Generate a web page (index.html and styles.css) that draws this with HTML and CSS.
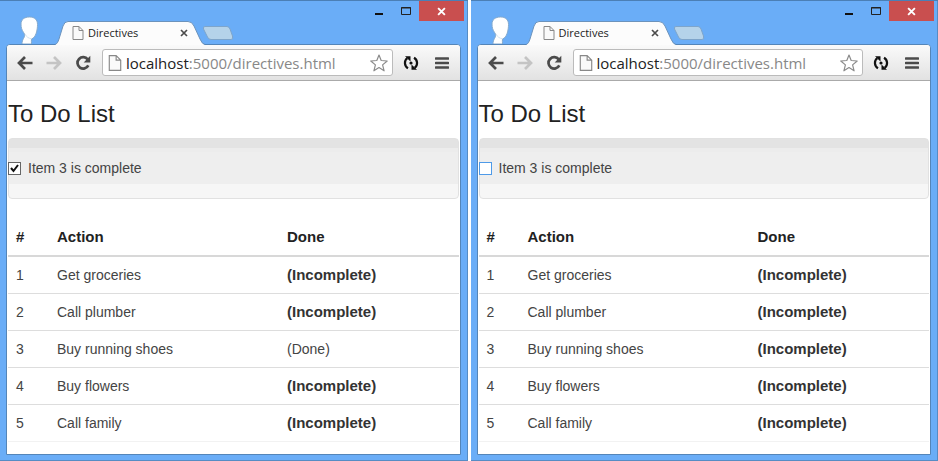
FILE: index.html
```html
<!DOCTYPE html>
<html lang="en">
<head>
<meta charset="utf-8">
<title>Directives</title>
<link rel="stylesheet" href="styles.css">
</head>
<body>
<svg class="sprite" aria-hidden="true">
  <symbol id="avatar" viewBox="0 0 20 28"><path d="M9.500 1C4.500 1 1 3.500 1 8c0 3.500.8 6 2.700 8.700C5 18.500 5 20 3.500 22.500 2.700 24 2 25.500 2 28h9.500c0-2-.3-3.500 0-5C16 21.500 17.500 14 17.500 8.500 17.500 3.500 14.500 1 9.500 1z" fill="#fff" stroke="#84aace"/><path d="M5 18c1.500 3 3.500 4.300 6.500 4.800" fill="none" stroke="#d5e3f0"/></symbol>
  <symbol id="tab-shape" viewBox="0 0 150 24"><path d="M0 24C2 23 3 21 4 18L8 5Q9.500 .5 13 .5H133Q137 .5 139 5L145 18Q147 23 150 24z" fill="#fcfcfc"/><path d="M0 23.500C2 23 3 21 4 18L8 5Q9.500 .5 13 .5H133Q137 .5 139 5L145 18Q147 23 150 23.500" fill="none" stroke="#6c93bc"/></symbol>
  <symbol id="new-tab" viewBox="0 0 32 16"><path d="M3 1.500H25Q27 1.500 28 4L30.500 11Q31.500 14.500 29 14.500H9Q6.500 14.500 5.500 12L1.500 4Q.8 1.500 3 1.500z" fill="#b5d3ea" stroke="#7ea5cb"/></symbol>
  <symbol id="page" viewBox="0 0 12 14"><path d="M1 .5H7L11 4.500V13.500H1zM7 .5V4.500H11" fill="#fafafa" stroke="#888"/></symbol>
  <symbol id="cross" viewBox="0 0 8 8"><path d="M1 1L7 7M7 1L1 7" fill="none" stroke="currentColor" stroke-width="1.700"/></symbol>
  <symbol id="arrow" viewBox="0 0 16 14"><path d="M8 1L2 7L8 13M2 7H15.500" fill="none" stroke="currentColor" stroke-width="2.700"/></symbol>
  <symbol id="reload" viewBox="0 0 16 16"><path d="M12.700 4.400A5.700 5.700 0 1 0 13.300 10.400" fill="none" stroke="currentColor" stroke-width="2.700"/><path d="M15.300 .8V7.500H8.700z" fill="currentColor"/></symbol>
  <symbol id="star" viewBox="0 0 18 18"><path d="M9 1L11.200 6.500L17.200 7L12.600 10.900L14.100 16.800L9 13.600L3.900 16.800L5.400 10.900L.8 7L6.800 6.500z" fill="#fff" stroke="#8b8b8b" stroke-width="1.200" stroke-linejoin="round"/></symbol>
  <symbol id="sync" viewBox="0 0 16 16"><path d="M4.300 3.200A6 6 0 0 0 5 13.200M11.700 12.800A6 6 0 0 0 11 2.800" fill="none" stroke="#111" stroke-width="2.200"/><path d="M2 1.200H7.500V6.500zM14 14.800H8.500V9.500z" fill="#111"/><circle cx="8" cy="8" r="1.600" fill="#111"/></symbol>
  <symbol id="menu" viewBox="0 0 14 13"><path d="M1 2H13M1 6.500H13M1 11H13" fill="none" stroke="#4b4b4b" stroke-width="2.600" stroke-linecap="round"/></symbol>
  <symbol id="minimize" viewBox="0 0 12 10"><path d="M2 8H10" stroke="#111" stroke-width="2"/></symbol>
  <symbol id="maximize" viewBox="0 0 12 10"><path d="M1.500 1.500H10.500V8.500H1.500zM1 2H11" fill="none" stroke="#222"/></symbol>
</svg>
<main class="desktop">
  <section class="window" aria-label="Item 3 done">
    <header class="strip">
      <svg class="avatar"><use href="#avatar"/></svg>
      <div class="tab">
        <svg class="tab-shape"><use href="#tab-shape"/></svg>
        <svg class="tab-page"><use href="#page"/></svg>
        <span class="tab-title">Directives</span>
        <button class="tab-close" aria-label="Close tab"><svg><use href="#cross"/></svg></button>
      </div>
      <button class="new-tab" aria-label="New tab"><svg><use href="#new-tab"/></svg></button>
      <div class="controls">
        <button aria-label="Minimize"><svg><use href="#minimize"/></svg></button>
        <button aria-label="Maximize"><svg><use href="#maximize"/></svg></button>
        <button class="close" aria-label="Close"><svg><use href="#cross"/></svg></button>
      </div>
    </header>
    <div class="frame">
      <nav class="toolbar">
        <button aria-label="Back"><svg><use href="#arrow"/></svg></button>
        <button class="forward" aria-label="Forward"><svg><use href="#arrow"/></svg></button>
        <button aria-label="Reload"><svg><use href="#reload"/></svg></button>
        <div class="address">
          <svg class="address-page"><use href="#page"/></svg>
          <span class="url">localhost<span class="path">:5000/directives.html</span></span>
          <button aria-label="Bookmark"><svg class="star"><use href="#star"/></svg></button>
        </div>
        <button aria-label="Sync"><svg><use href="#sync"/></svg></button>
        <button class="menu" aria-label="Menu"><svg><use href="#menu"/></svg></button>
      </nav>
      <div class="page">
        <h1>To Do List</h1>
        <div class="well"><label><input type="checkbox" checked>Item 3 is complete</label></div>
        <table>
          <thead><tr><th class="num">#</th><th class="action">Action</th><th>Done</th></tr></thead>
          <tbody>
            <tr><td>1</td><td>Get groceries</td><td><strong>(Incomplete)</strong></td></tr>
            <tr><td>2</td><td>Call plumber</td><td><strong>(Incomplete)</strong></td></tr>
            <tr><td>3</td><td>Buy running shoes</td><td>(Done)</td></tr>
            <tr><td>4</td><td>Buy flowers</td><td><strong>(Incomplete)</strong></td></tr>
            <tr><td>5</td><td>Call family</td><td><strong>(Incomplete)</strong></td></tr>
          </tbody>
        </table>
      </div>
    </div>
  </section>
  <section class="window" aria-label="Item 3 not done">
    <header class="strip">
      <svg class="avatar"><use href="#avatar"/></svg>
      <div class="tab">
        <svg class="tab-shape"><use href="#tab-shape"/></svg>
        <svg class="tab-page"><use href="#page"/></svg>
        <span class="tab-title">Directives</span>
        <button class="tab-close" aria-label="Close tab"><svg><use href="#cross"/></svg></button>
      </div>
      <button class="new-tab" aria-label="New tab"><svg><use href="#new-tab"/></svg></button>
      <div class="controls">
        <button aria-label="Minimize"><svg><use href="#minimize"/></svg></button>
        <button aria-label="Maximize"><svg><use href="#maximize"/></svg></button>
        <button class="close" aria-label="Close"><svg><use href="#cross"/></svg></button>
      </div>
    </header>
    <div class="frame">
      <nav class="toolbar">
        <button aria-label="Back"><svg><use href="#arrow"/></svg></button>
        <button class="forward" aria-label="Forward"><svg><use href="#arrow"/></svg></button>
        <button aria-label="Reload"><svg><use href="#reload"/></svg></button>
        <div class="address">
          <svg class="address-page"><use href="#page"/></svg>
          <span class="url">localhost<span class="path">:5000/directives.html</span></span>
          <button aria-label="Bookmark"><svg class="star"><use href="#star"/></svg></button>
        </div>
        <button aria-label="Sync"><svg><use href="#sync"/></svg></button>
        <button class="menu" aria-label="Menu"><svg><use href="#menu"/></svg></button>
      </nav>
      <div class="page">
        <h1>To Do List</h1>
        <div class="well"><label><input type="checkbox">Item 3 is complete</label></div>
        <table>
          <thead><tr><th class="num">#</th><th class="action">Action</th><th>Done</th></tr></thead>
          <tbody>
            <tr><td>1</td><td>Get groceries</td><td><strong>(Incomplete)</strong></td></tr>
            <tr><td>2</td><td>Call plumber</td><td><strong>(Incomplete)</strong></td></tr>
            <tr><td>3</td><td>Buy running shoes</td><td><strong>(Incomplete)</strong></td></tr>
            <tr><td>4</td><td>Buy flowers</td><td><strong>(Incomplete)</strong></td></tr>
            <tr><td>5</td><td>Call family</td><td><strong>(Incomplete)</strong></td></tr>
          </tbody>
        </table>
      </div>
    </div>
  </section>
</main>
</body>
</html>
```
FILE: styles.css
```css
* { box-sizing: border-box; }
body {
  margin: 0;
  background: #fff;
  color: #444;
  font: 14px/20px "Liberation Sans", Arial, sans-serif;
}
.sprite { display: none; }
svg { display: block; }
button {
  display: block;
  margin: 0;
  padding: 0;
  border: 0;
  background: none;
  color: #4b4b4b;
}
.desktop {
  display: grid;
  grid-template-columns: 1fr 1fr;
  gap: 3px;
  min-height: 100vh;
}
.window {
  display: flex;
  flex-direction: column;
  padding: 0 7px 6px 6px;
  background: #6aadf7;
  box-shadow: inset 0 1px #4b7fb5, inset -1px -1px #568cc4;
}

/* Tab strip */
.strip { display: flex; height: 44px; padding-left: 14px; }
.avatar { width: 20px; height: 28px; margin-top: 16px; }
.tab {
  position: relative;
  z-index: 1;
  display: flex;
  align-items: center;
  width: 150px;
  height: 24px;
  margin: 21px 0 0 15px;
  padding: 0 17px;
}
.tab-shape { position: absolute; inset: 0; width: 150px; height: 24px; }
.tab-page { position: relative; width: 12px; height: 14px; }
.tab-title {
  position: relative;
  flex: 1;
  margin-left: 4px;
  color: #222;
  font: 11px/16px "Open Sans", "Noto Sans", sans-serif;
}
.tab-close { position: relative; }
.tab-close svg { width: 8px; height: 8px; }
.new-tab { align-self: flex-start; margin: 25px 0 0 -3px; }
.new-tab svg { width: 32px; height: 16px; }
.controls { display: flex; gap: 15px; margin: 1px -3px 0 auto; height: 20px; }
.controls svg { width: 12px; height: 10px; }
.controls .close {
  width: 45px;
  margin-left: -8px;
  background: #c94f4f;
  color: #fff;
}
.controls .close svg { width: 9px; height: 9px; margin: 0 auto; }

/* Browser frame */
.frame {
  flex: 1;
  overflow: hidden;
  border: 1px solid #5485b8;
  border-radius: 4px 4px 0 0;
  background: #fff;
}
.toolbar {
  display: flex;
  align-items: center;
  gap: 13px;
  height: 36px;
  padding: 0 11px 0 10px;
  border-bottom: 1px solid #aaa;
  background: linear-gradient(#fafafa, #e2e2e2);
}
.toolbar svg { width: 16px; height: 16px; }
.toolbar .forward { color: #c4c4c4; transform: scaleX(-1); }
.toolbar .menu svg { width: 14px; height: 14px; }
.menu { margin-left: 3px; }
.address {
  flex: 1;
  display: flex;
  align-items: center;
  height: 27px;
  margin: 0 -3px 0 -2px;
  padding: 0 4px 0 5px;
  border: 1px solid #bbb;
  border-radius: 3px;
  background: #fff;
}
.toolbar .address-page { width: 14px; height: 16px; }
.url {
  flex: 1;
  margin-left: 4px;
  color: #222;
  font: 15px/20px "Open Sans", "Noto Sans", sans-serif;
}
.path { color: #888; }
.toolbar .star { width: 18px; height: 18px; }

/* Page content */
.page { padding: 20px 1px 9px; }
h1 {
  margin: 0 0 11px;
  color: #222;
  font-size: 24px;
  font-weight: 400;
  line-height: 26px;
}
.well {
  margin-bottom: 20px;
  padding: 19px 0 20px;
  border: 1px solid #e1e1e1;
  border-radius: 4px;
  background: linear-gradient(#e3e3e3 9px, #ececec 9px 13px, #eee 13px 45px, #f6f6f6 45px);
}
.well label { display: flex; align-items: center; gap: 7px; }
.well input {
  appearance: none;
  width: 13px;
  height: 13px;
  margin: 0 0 0 -1px;
  border: 1px solid #4e9ae8;
  background: #fff;
}
.well input:checked {
  border-color: #666;
  background: url("data:image/svg+xml,%3Csvg xmlns='http://www.w3.org/2000/svg' viewBox='0 0 11 11'%3E%3Cpath d='M2 5l2.500 3L9 2' fill='none' stroke='%23111' stroke-width='2'/%3E%3C/svg%3E") #fff;
}
table { width: 100%; border-collapse: separate; border-spacing: 0; table-layout: fixed; }
th, td { padding: 8px; text-align: left; border-bottom: 1px solid #ddd; }
th { border-bottom-width: 2px; color: #222; }
th, strong { font-size: 15px; font-weight: 700; }
strong { color: #333; }
td { line-height: 20px; }
tr:last-child td { border-bottom-color: #f2f2f2; }
thead tr:last-child th { border-bottom-color: #d8d8d8; }
.num { width: 41px; }
.action { width: 230px; }
```
